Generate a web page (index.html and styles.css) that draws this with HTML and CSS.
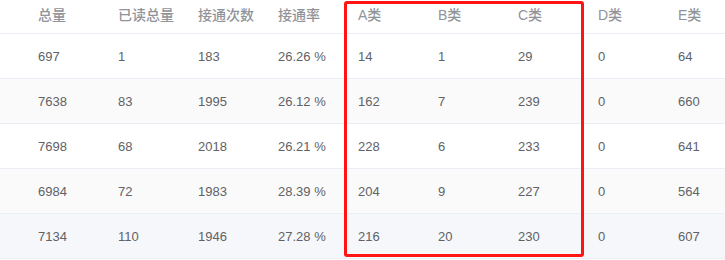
FILE: index.html
```html
<!DOCTYPE html>
<html lang="zh">
<head>
<meta charset="utf-8">
<link rel="stylesheet" href="styles.css">
</head>
<body>
<div class="table">
  <div class="row head">
    <div class="cell">总量</div><div class="cell">已读总量</div><div class="cell">接通次数</div><div class="cell">接通率</div><div class="cell">A类</div><div class="cell">B类</div><div class="cell">C类</div><div class="cell">D类</div><div class="cell">E类</div>
  </div>
  <div class="row">
    <div class="cell">697</div><div class="cell">1</div><div class="cell">183</div><div class="cell">26.26 %</div><div class="cell">14</div><div class="cell">1</div><div class="cell">29</div><div class="cell">0</div><div class="cell">64</div>
  </div>
  <div class="row striped">
    <div class="cell">7638</div><div class="cell">83</div><div class="cell">1995</div><div class="cell">26.12 %</div><div class="cell">162</div><div class="cell">7</div><div class="cell">239</div><div class="cell">0</div><div class="cell">660</div>
  </div>
  <div class="row">
    <div class="cell">7698</div><div class="cell">68</div><div class="cell">2018</div><div class="cell">26.21 %</div><div class="cell">228</div><div class="cell">6</div><div class="cell">233</div><div class="cell">0</div><div class="cell">641</div>
  </div>
  <div class="row striped">
    <div class="cell">6984</div><div class="cell">72</div><div class="cell">1983</div><div class="cell">28.39 %</div><div class="cell">204</div><div class="cell">9</div><div class="cell">227</div><div class="cell">0</div><div class="cell">564</div>
  </div>
  <div class="row hover">
    <div class="cell">7134</div><div class="cell">110</div><div class="cell">1946</div><div class="cell">27.28 %</div><div class="cell">216</div><div class="cell">20</div><div class="cell">230</div><div class="cell">0</div><div class="cell">607</div>
  </div>
  <div class="highlight"></div>
</div>
</body>
</html>
```
FILE: styles.css
```css
html, body {
  margin: 0;
  padding: 0;
  background: #ffffff;
  overflow: hidden;
}
body {
  font-family: "Liberation Sans", "Noto Sans CJK SC", sans-serif;
  font-size: 13px;
  color: #606266;
}
.table {
  position: relative;
  width: 725px;
  height: 260px;
  overflow: hidden;
}
.row {
  display: flex;
  height: 44px;
  padding-left: 28px;
  border-bottom: 1px solid #ebeef5;
  align-items: center;
}
.row.head {
  height: 33px;
  color: #909399;
  font-size: 14px;
  font-weight: 500;
  align-items: flex-start;
}
.row.head .cell {
  line-height: 16px;
  padding-top: 7px;
}
.row.striped {
  background: #fafafa;
}
.row.hover {
  background: #f5f7fa;
}
.cell {
  flex: 0 0 80px;
  box-sizing: border-box;
  padding-left: 10px;
  white-space: nowrap;
}
.highlight {
  position: absolute;
  left: 344px;
  top: 1px;
  width: 240px;
  height: 256px;
  box-sizing: border-box;
  border: 3px solid #ff1414;
  border-radius: 3px;
}
```
